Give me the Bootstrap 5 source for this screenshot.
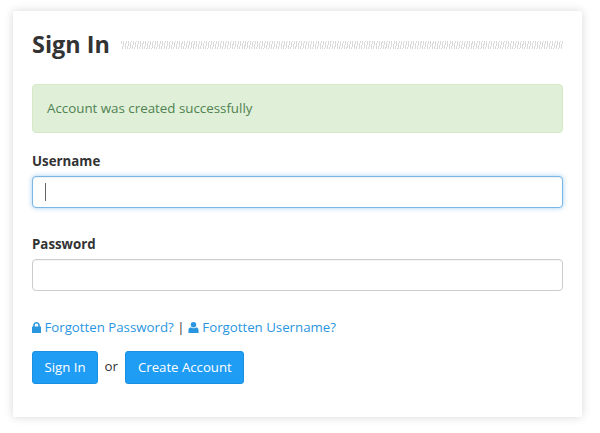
<!DOCTYPE html>
<html lang="en">
<head>
  <meta charset="UTF-8">
  <title>Sign In</title>
  <link href="https://cdn.jsdelivr.net/npm/bootstrap@5.3.0/dist/css/bootstrap.min.css" rel="stylesheet">
  <style>
    html, body {
      height: 100%;
    }

    body {
      font-family: "Open Sans", sans-serif;
      font-size: 13.25px;
      color: #333;
      background: #fff;
      padding: 11px 18px 16px 13px;
      overflow: hidden;
    }

    .login-box {
      background: #fff;
      height: 406px;
      padding: 15px 19px 0;
      border-radius: 2px;
      box-shadow: 0 0 10px rgba(0, 0, 0, 0.16);
    }

    .title-row {
      height: 37px;
      margin-bottom: 21px;
    }

    .title-row h1 {
      font-family: "Open Sans", sans-serif;
      font-size: 23.4px;
      font-weight: 700;
      line-height: 37px;
      color: #333;
      margin: 0 11px 0 0;
    }

    .title-stripes {
      height: 8px;
      margin-top: 1px;
      background: repeating-linear-gradient(100deg, #dadada 0, #dadada 1px, #fff 1px, #fff 2.4px);
    }

    .msg-ok {
      height: 49px;
      padding: 0 14px;
      margin-bottom: 19px;
      font-size: 13.33px;
      line-height: 47px;
      color: #4f8250;
      background: #dfefd8;
      border: 1px solid #d6e9c6;
      border-radius: 4px;
    }

    .field-label {
      display: block;
      font-size: 13.3px;
      font-weight: 700;
      line-height: 18px;
      color: #333;
      margin-bottom: 6px;
    }

    .login-box .form-control {
      height: 32px;
      font-family: "Open Sans", sans-serif;
      font-size: 13.33px;
      padding: 5px 12px;
      border: 1px solid #ccc;
      border-radius: 4px;
      box-shadow: inset 0 1px 1px rgba(0, 0, 0, 0.04);
    }

    .login-box .field-focus {
      border-color: #7ab6e6;
      box-shadow: inset 0 1px 1px rgba(0, 0, 0, 0.06), 0 0 5px rgba(102, 175, 233, 0.6);
    }

    .fake-caret {
      position: absolute;
      left: 13px;
      top: 7px;
      width: 1px;
      height: 18px;
      background: #666;
    }

    .field-wrap {
      margin-bottom: 27px;
    }

    .help-links {
      line-height: 18px;
      margin-top: 27px;
      margin-bottom: 15px;
      color: #333;
    }

    .help-links a {
      color: #2b96e0;
      text-decoration: none;
    }

    .help-links svg {
      height: 11px;
      fill: #2b96e0;
      vertical-align: -1px;
    }

    .icon-lock {
      width: 9px;
    }

    .icon-user {
      width: 11px;
    }

    .btn-blue {
      height: 33px;
      font-size: 13.2px;
      line-height: 31px;
      padding: 0 11.5px;
      color: #fff;
      background: #1f9cf4;
      border: 1px solid #1a90e2;
      border-radius: 3px;
    }

    .or-word {
      margin: 0 7.5px 0 6.5px;
      font-size: 13.33px;
      position: relative;
      top: -1px;
    }
  </style>
</head>
<body>
  <div class="login-box">
    <div class="title-row d-flex align-items-center">
      <h1>Sign In</h1>
      <div class="title-stripes flex-grow-1"></div>
    </div>

    <div class="msg-ok">Account was created successfully</div>

    <form>
      <div class="field-wrap">
        <label class="field-label" for="username">Username</label>
        <div class="position-relative">
          <input class="form-control field-focus" type="text" id="username">
          <span class="fake-caret"></span>
        </div>
      </div>
      <div class="field-wrap">
        <label class="field-label" for="password">Password</label>
        <input class="form-control" type="password" id="password">
      </div>

      <div class="help-links">
        <a href="#"><svg class="icon-lock" viewBox="0 0 9 11"><path d="M1.2 4.6V3.2C1.2 1.3 2.7 0 4.5 0S7.8 1.3 7.8 3.2V4.6H9V11H0V4.6ZM2.8 4.6H6.2V3.2C6.2 2.2 5.5 1.6 4.5 1.6S2.8 2.2 2.8 3.2Z"/></svg> Forgotten Password?</a> | <a href="#"><svg class="icon-user" viewBox="0 0 12 12"><circle cx="6" cy="3.1" r="3"/><path d="M0.5 12V9C0.5 7.2 1.6 6.2 3 5.8 3.7 6.4 4.8 6.8 6 6.8S8.3 6.4 9 5.8C10.4 6.2 11.5 7.2 11.5 9V12Z"/></svg> Forgotten Username?</a>
      </div>

      <div class="d-flex align-items-center">
        <button type="button" class="btn btn-blue">Sign In</button>
        <span class="or-word">or</span>
        <button type="button" class="btn btn-blue">Create Account</button>
      </div>
    </form>
  </div>
</body>
</html>
